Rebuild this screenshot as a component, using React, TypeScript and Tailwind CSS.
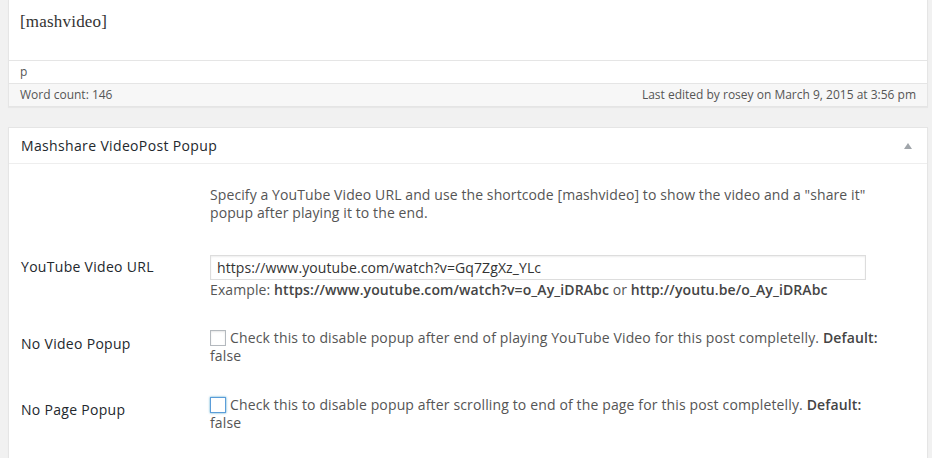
export default function App() {
  const sans = "font-['Open_Sans','Noto_Sans',sans-serif]";

  return (
    <div className={`w-[932px] h-[458px] overflow-hidden bg-[#f1f1f1] ${sans}`}>
      <div className="flex flex-col w-[920px] ml-[8px]">
        {/* editor area */}
        <div className="flex flex-col bg-white border-x border-b border-[#e5e5e5] shadow-[0_1px_1px_rgba(0,0,0,0.04)]">
          <div className="h-[61px] px-[11px] pt-[10px] border-b border-[#e5e5e5]">
            <p className="font-['Liberation_Serif',serif] text-[17px] leading-[24px] text-[#333] tracking-[0.2px]">[mashvideo]</p>
          </div>

          <div className="h-[23px] flex items-center px-[11px] border-b border-[#e5e5e5]">
            <p className="text-[12px] text-[#555] leading-none">p</p>
          </div>

          <div className="h-[22px] flex items-center justify-between px-[11px] bg-[#f7f7f7]">
            <p className="text-[12px] text-[#555]">Word count: 146</p>
            <p className="text-[12px] text-[#555]">Last edited by rosey on March 9, 2015 at 3:56 pm</p>
          </div>
        </div>

        {/* metabox */}
        <div className="flex flex-col mt-[20px] bg-white border border-[#e5e5e5] shadow-[0_1px_1px_rgba(0,0,0,0.04)] h-[400px]">
          <div className="h-[36px] flex items-center justify-between px-[12px] border-b border-[#eee]">
            <p className="text-[14px] font-medium tracking-[0.35px] text-[#23282d]">Mashshare VideoPost Popup</p>
            <svg width="10" height="8" viewBox="0 0 10 8" className="mr-[2px]">
              <path d="M5 1 L9 7 L1 7 Z" fill="#a0a5aa" />
            </svg>
          </div>

          <div className="flex flex-col pl-[12px] pt-[22px]">
            <div className="flex">
              <div className="w-[189px] shrink-0"></div>
              <p className="text-[14px] leading-[18px] text-[#555] tracking-[0.1px]">
                Specify a YouTube Video URL and use the shortcode [mashvideo] to show the video and a "share it"
                <br />
                popup after playing it to the end.
              </p>
            </div>

            <div className="flex mt-[33px]">
              <p className="w-[189px] shrink-0 pt-[3px] text-[14px] leading-[18px] font-medium tracking-[0.3px] text-[#23282d]">YouTube Video URL</p>
              <div className="flex flex-col">
                <div className="w-[656px] h-[25px] flex items-center px-[6px] border border-[#ddd] shadow-[inset_0_1px_2px_rgba(0,0,0,0.07)]">
                  <p className="text-[14px] text-[#333] tracking-[0.1px]">https://www.youtube.com/watch?v=Gq7ZgXz_YLc</p>
                </div>
                <p className="text-[14px] leading-[18px] text-[#555] mt-[1px] tracking-[0.1px]">
                  Example: <span className="font-semibold text-[#444]">https://www.youtube.com/watch?v=o_Ay_iDRAbc</span> or <span className="font-semibold text-[#444]">http://youtu.be/o_Ay_iDRAbc</span>
                </p>
              </div>
            </div>

            <div className="flex mt-[30px]">
              <p className="w-[189px] shrink-0 pt-[6px] text-[14px] leading-[18px] font-medium tracking-[0.3px] text-[#23282d]">No Video Popup</p>
              <p className="text-[14px] leading-[18px] text-[#555] tracking-[0.14px]">
                <span className="inline-block align-[-3px] w-[16px] h-[16px] mr-[4px] border border-[#b4b9be] bg-white shadow-[inset_0_1px_2px_rgba(0,0,0,0.1)]"></span>
                Check this to disable popup after end of playing YouTube Video for this post completelly. <span className="font-semibold text-[#444]">Default:</span>
                <br />
                false
              </p>
            </div>

            <div className="flex mt-[31px]">
              <p className="w-[189px] shrink-0 pt-[5px] text-[14px] leading-[18px] font-medium tracking-[0.3px] text-[#23282d]">No Page Popup</p>
              <p className="text-[14px] leading-[18px] text-[#555] tracking-[0.14px]">
                <span className="inline-block align-[-3px] w-[16px] h-[16px] mr-[4px] border border-[#5b9dd9] bg-white shadow-[0_0_2px_rgba(30,140,190,0.8)]"></span>
                Check this to disable popup after scrolling to end of the page for this post completelly. <span className="font-semibold text-[#444]">Default:</span>
                <br />
                false
              </p>
            </div>
          </div>
        </div>
      </div>
    </div>
  );
}
